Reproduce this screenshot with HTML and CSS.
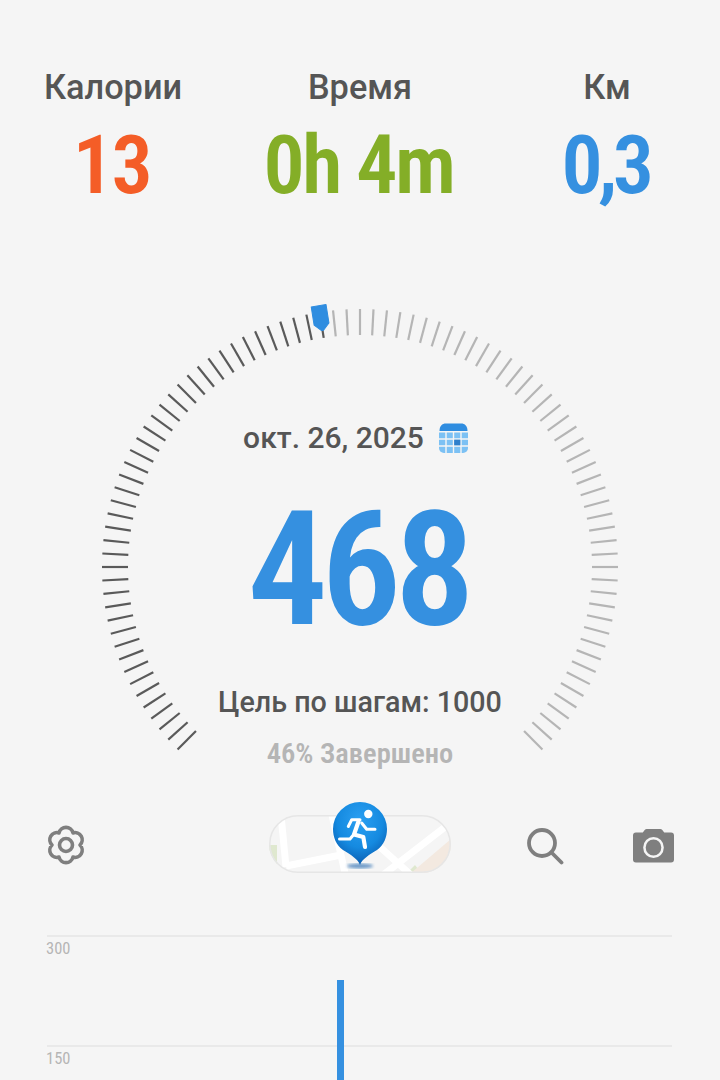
FILE: index.html
```html
<!DOCTYPE html>
<html lang="ru">
<head>
<meta charset="utf-8">
<title>Шаги</title>
<link rel="stylesheet" href="styles.css">
</head>
<body>
<main class="screen">
  <section class="stats">
    <div class="stat"><div class="stat-label">Калории</div><div class="stat-value cal">13</div></div>
    <div class="stat"><div class="stat-label">Время</div><div class="stat-value time">0h 4m</div></div>
    <div class="stat"><div class="stat-label">Км</div><div class="stat-value km">0,3</div></div>
  </section>

  <section class="gauge">
    <svg class="dial" width="560" height="500" viewBox="-280 -280 560 500" aria-hidden="true">
      <defs>
        <line id="t" x1="0" y1="-258" x2="0" y2="-232"/>
      </defs>
      <g class="ticks-on">
        <use href="#t" transform="rotate(-135)"/><use href="#t" transform="rotate(-132)"/><use href="#t" transform="rotate(-129)"/><use href="#t" transform="rotate(-126)"/><use href="#t" transform="rotate(-123)"/><use href="#t" transform="rotate(-120)"/><use href="#t" transform="rotate(-117)"/><use href="#t" transform="rotate(-114)"/><use href="#t" transform="rotate(-111)"/><use href="#t" transform="rotate(-108)"/><use href="#t" transform="rotate(-105)"/><use href="#t" transform="rotate(-102)"/><use href="#t" transform="rotate(-99)"/><use href="#t" transform="rotate(-96)"/><use href="#t" transform="rotate(-93)"/><use href="#t" transform="rotate(-90)"/><use href="#t" transform="rotate(-87)"/><use href="#t" transform="rotate(-84)"/><use href="#t" transform="rotate(-81)"/><use href="#t" transform="rotate(-78)"/><use href="#t" transform="rotate(-75)"/><use href="#t" transform="rotate(-72)"/><use href="#t" transform="rotate(-69)"/><use href="#t" transform="rotate(-66)"/><use href="#t" transform="rotate(-63)"/><use href="#t" transform="rotate(-60)"/><use href="#t" transform="rotate(-57)"/><use href="#t" transform="rotate(-54)"/><use href="#t" transform="rotate(-51)"/><use href="#t" transform="rotate(-48)"/><use href="#t" transform="rotate(-45)"/><use href="#t" transform="rotate(-42)"/><use href="#t" transform="rotate(-39)"/><use href="#t" transform="rotate(-36)"/><use href="#t" transform="rotate(-33)"/><use href="#t" transform="rotate(-30)"/><use href="#t" transform="rotate(-27)"/><use href="#t" transform="rotate(-24)"/><use href="#t" transform="rotate(-21)"/><use href="#t" transform="rotate(-18)"/><use href="#t" transform="rotate(-15)"/><use href="#t" transform="rotate(-12)"/><use href="#t" transform="rotate(-9)"/>
      </g>
      <g class="ticks-off">
        <use href="#t" transform="rotate(-6)"/><use href="#t" transform="rotate(-3)"/><use href="#t" transform="rotate(0)"/><use href="#t" transform="rotate(3)"/><use href="#t" transform="rotate(6)"/><use href="#t" transform="rotate(9)"/><use href="#t" transform="rotate(12)"/><use href="#t" transform="rotate(15)"/><use href="#t" transform="rotate(18)"/><use href="#t" transform="rotate(21)"/><use href="#t" transform="rotate(24)"/><use href="#t" transform="rotate(27)"/><use href="#t" transform="rotate(30)"/><use href="#t" transform="rotate(33)"/><use href="#t" transform="rotate(36)"/><use href="#t" transform="rotate(39)"/><use href="#t" transform="rotate(42)"/><use href="#t" transform="rotate(45)"/><use href="#t" transform="rotate(48)"/><use href="#t" transform="rotate(51)"/><use href="#t" transform="rotate(54)"/><use href="#t" transform="rotate(57)"/><use href="#t" transform="rotate(60)"/><use href="#t" transform="rotate(63)"/><use href="#t" transform="rotate(66)"/><use href="#t" transform="rotate(69)"/><use href="#t" transform="rotate(72)"/><use href="#t" transform="rotate(75)"/><use href="#t" transform="rotate(78)"/><use href="#t" transform="rotate(81)"/><use href="#t" transform="rotate(84)"/><use href="#t" transform="rotate(87)"/><use href="#t" transform="rotate(90)"/><use href="#t" transform="rotate(93)"/><use href="#t" transform="rotate(96)"/><use href="#t" transform="rotate(99)"/><use href="#t" transform="rotate(102)"/><use href="#t" transform="rotate(105)"/><use href="#t" transform="rotate(108)"/><use href="#t" transform="rotate(111)"/><use href="#t" transform="rotate(114)"/><use href="#t" transform="rotate(117)"/><use href="#t" transform="rotate(120)"/><use href="#t" transform="rotate(123)"/><use href="#t" transform="rotate(126)"/><use href="#t" transform="rotate(129)"/><use href="#t" transform="rotate(132)"/><use href="#t" transform="rotate(135)"/>
      </g>
      <path class="needle" transform="rotate(-9)" d="M-7.5 -264.5 H7.5 V-246 L1 -239.5 H-1 L-7.5 -246 Z"/>
    </svg>

    <div class="date-row">
      <span class="date">окт. 26, 2025</span>
      <svg class="calendar" width="29" height="30" viewBox="0 0 29 30" aria-hidden="true">
        <path class="cal-head" d="M0.5 8 C0.5 3 3 0.5 7 0.5 H22 C26 0.5 28.5 3 28.5 8 Z"/>
        <path class="cal-body" d="M0 9.5 H29 V25 A5 5 0 0 1 24 30 H5 A5 5 0 0 1 0 25 Z"/>
        <path class="cal-grid" d="M7 9 V30 M14.5 9 V30 M22 9 V30 M0 16 H29 M0 23 H29"/>
        <rect class="cal-today" x="15.2" y="16.7" width="6.1" height="5.6"/>
      </svg>
    </div>
    <div class="steps">468</div>
    <div class="goal">Цель по шагам: 1000</div>
    <div class="done">46% Завершено</div>
  </section>

  <section class="toolbar">
    <svg class="gear" width="38" height="40" viewBox="-19 -20 38 40" aria-hidden="true">
      <path d="M-7 -12.1 A7.2 7.2 0 0 1 7 -12.1 A7.2 7.2 0 0 1 14 0 A7.2 7.2 0 0 1 7 12.1 A7.2 7.2 0 0 1 -7 12.1 A7.2 7.2 0 0 1 -14 0 A7.2 7.2 0 0 1 -7 -12.1 Z"/>
      <circle r="6.5"/>
    </svg>
    <div class="map-wrap">
      <svg class="map" width="182" height="58" viewBox="0 0 182 58" aria-hidden="true">
        <defs><clipPath id="pill"><rect width="182" height="58" rx="29"/></clipPath></defs>
        <g clip-path="url(#pill)">
          <rect class="map-land" width="182" height="58"/>
          <path class="map-park" d="M0 30 H8 V50 H0 Z M138 58 L146 50 L152 58 Z"/>
          <path class="map-zone" d="M142 58 L182 24 V58 Z"/>
          <path class="map-road" d="M12 0 L17 52 M17 51 L72 40 M63 0 L76 58 M111 32 L142 60 M176 12 L114 60"/>
        </g>
        <rect class="map-edge" x="0.75" y="0.75" width="180.5" height="56.5" rx="28.25"/>
      </svg>
      <svg class="pin" width="60" height="72" viewBox="0 0 60 72" aria-hidden="true">
        <defs>
          <radialGradient id="pinfill" cx="50%" cy="30%" r="70%">
            <stop offset="0" stop-color="#2ba0f2"/>
            <stop offset="0.6" stop-color="#158ae0"/>
            <stop offset="1" stop-color="#0a5cb0"/>
          </radialGradient>
          <filter id="soft"><feGaussianBlur stdDeviation="1.4"/></filter>
        </defs>
        <ellipse class="pin-shadow" cx="30" cy="67" rx="13" ry="2.4" filter="url(#soft)"/>
        <path fill="url(#pinfill)" d="M30 66 C28 60 21 56 13 51 C6 46 3 38 3 30 A27 27 0 0 1 57 30 C57 38 54 46 47 51 C39 56 32 60 30 66 Z"/>
        <circle class="man-head" cx="38.3" cy="15" r="4.2"/>
        <path class="man-limb" d="M30 20.8 H21.7 L18.3 27.5 M31.7 24 L36.7 30.3 H45 M9.5 40 H20 L23.3 36"/>
        <path class="man-torso" d="M28.5 22.5 L24 35.5 L33.3 38 L35 48"/>
      </svg>
    </div>
    <svg class="search" width="38" height="38" viewBox="0 0 38 38" aria-hidden="true">
      <circle cx="16" cy="15" r="13"/>
      <path d="M26 25 L35.5 34.5"/>
    </svg>
    <svg class="camera" width="41" height="34" viewBox="0 0 42 34" preserveAspectRatio="none" aria-hidden="true">
      <path class="cam-body" d="M3 3.5 H10 L12 1 A3 3 0 0 1 14 0 H28 A3 3 0 0 1 30 1 L32 3.5 H39 A3 3 0 0 1 42 6.5 V30.5 A3 3 0 0 1 39 33.5 H3 A3 3 0 0 1 0 30.5 V6.5 A3 3 0 0 1 3 3.5 Z"/>
      <circle class="cam-lens" cx="21" cy="18.5" r="9.3"/>
    </svg>
  </section>

  <section class="chart">
    <div class="band"><span class="tick-label">300</span></div>
    <div class="band"><span class="tick-label">150</span></div>
    <div class="bar"></div>
  </section>
</main>
</body>
</html>
```
FILE: styles.css
```css
* { box-sizing: border-box; }
html, body { margin: 0; padding: 0; }
body {
  background: #f5f5f5;
  font-family: Roboto, "Noto Sans", sans-serif;
  color: #555555;
}
.screen {
  width: 720px;
  height: 1080px;
  overflow: hidden;
  padding-top: 67px;
}

/* top stats */
.stats {
  display: grid;
  grid-template-columns: 1fr 268px 1fr;
  text-align: center;
}
.stat-label {
  font-size: 34.3px;
  line-height: 40px;
  font-weight: 500;
}
.stat-value {
  margin-top: 10px;
  padding-right: 3px;
  font-size: 82px;
  line-height: 96px;
  font-weight: 600;
  font-stretch: 75%;
  letter-spacing: -2.5px;
}
.cal { color: #f45d27; }
.time { color: #84ae27; }
.km { color: #3590e0; letter-spacing: -4.5px; }

/* gauge */
.gauge {
  position: relative;
  height: 596px;
  padding-top: 205px;
  text-align: center;
}
.dial {
  position: absolute;
  left: 80px;
  top: 74px;
}
.dial line { stroke-width: 2.2px; }
.ticks-on { stroke: #5a5a5a; }
.ticks-off { stroke: #b5b5b5; }
.needle { fill: #2f8de0; stroke: #2f8de0; stroke-width: 1px; stroke-linejoin: round; }
.date-row {
  position: relative;
  display: flex;
  justify-content: center;
  align-items: center;
  gap: 15px;
  height: 40px;
  margin-right: 9px;
}
.date {
  font-size: 30px;
  font-weight: 500;
  line-height: 40px;
}
.cal-head { fill: #2f8de0; }
.cal-body { fill: #7cc1f4; }
.cal-grid { stroke: #f5f5f5; stroke-width: 1.4px; fill: none; }
.cal-today { fill: #2f7fcb; }
.steps {
  position: relative;
  margin-top: 22px;
  margin-right: 4px;
  font-size: 159px;
  line-height: 180px;
  font-weight: 600;
  font-stretch: 75%;
  letter-spacing: -6.5px;
  color: #3590e0;
}
.goal {
  position: relative;
  margin-top: 23px;
  font-size: 28.7px;
  line-height: 38px;
  font-weight: 500;
}
.done {
  position: relative;
  margin-top: 15px;
  font-size: 28.5px;
  line-height: 36px;
  font-weight: 600;
  font-stretch: 75%;
  color: #b5b5b5;
}

/* toolbar */
.toolbar {
  display: flex;
  align-items: center;
  height: 70px;
  padding-left: 47px;
}
.gear { margin-top: 2px; margin-right: 184px; flex: none; }
.gear path, .gear circle { fill: none; stroke: #7f7f7f; stroke-width: 3.6px; stroke-linejoin: round; }
.map-wrap { position: relative; width: 182px; height: 58px; margin-right: 75px; flex: none; }
.map { display: block; }
.map-land { fill: #f5f5f5; }
.map-park { fill: #dfe8cf; }
.map-zone { fill: #f3e9e0; }
.map-road { fill: none; stroke: #ffffff; stroke-width: 7px; }
.map-edge { fill: none; stroke: #e6e6e6; stroke-width: 1.5px; }
.pin { position: absolute; left: 61px; top: -16px; }
.pin-shadow { fill: #0b5aa8; opacity: 0.6; }
.man-head { fill: #ffffff; }
.man-limb { fill: none; stroke: #ffffff; stroke-width: 3px; stroke-linejoin: round; stroke-linecap: round; }
.man-torso { fill: none; stroke: #ffffff; stroke-width: 4.2px; stroke-linejoin: round; stroke-linecap: round; }
.search { margin-top: 6px; margin-right: 69px; flex: none; }
.search circle, .search path { fill: none; stroke: #7f7f7f; stroke-width: 3.8px; stroke-linecap: round; }
.camera { margin-top: 3px; flex: none; }
.cam-body { fill: #7f7f7f; }
.cam-lens { fill: #7f7f7f; stroke: #f5f5f5; stroke-width: 2.6px; }

/* chart */
.chart {
  position: relative;
  margin: 56px 47px 0;
  width: 625px;
}
.band {
  height: 110px;
  border-top: 2px solid #e9e9e9;
}
.tick-label {
  display: block;
  margin-top: 3px;
  margin-left: -1px;
  font-size: 16.5px;
  line-height: 18px;
  font-stretch: 75%;
  color: #b5b5b5;
}
.bar {
  position: absolute;
  left: 290px;
  top: 45px;
  bottom: -10px;
  width: 7px;
  background: #3590e0;
}
```
